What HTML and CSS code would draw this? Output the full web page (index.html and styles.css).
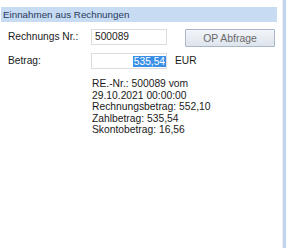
FILE: index.html
```html
<!DOCTYPE html>
<html lang="de">
<head>
    <meta charset="UTF-8">
    <title>Einnahmen aus Rechnungen</title>
    <link rel="stylesheet" href="styles.css">
</head>
<body>
    <div class="window">
        <div class="panel">
            <div class="caption">Einnahmen aus Rechnungen</div>
            <div class="row row-nr">
                <div class="label">Rechnungs Nr.:</div>
                <div class="field field-nr">500089</div>
                <button class="op-btn">OP Abfrage</button>
            </div>
            <div class="row row-betrag">
                <div class="label">Betrag:</div>
                <div class="field field-betrag"><span class="selected">535,54</span></div>
                <div class="unit">EUR</div>
            </div>
            <div class="info">
                <div>RE.-Nr.: 500089 vom</div>
                <div>29.10.2021 00:00:00</div>
                <div>Rechnungsbetrag: 552,10</div>
                <div>Zahlbetrag: 535,54</div>
                <div>Skontobetrag: 16,56</div>
            </div>
        </div>
        <div class="edge"></div>
    </div>
</body>
</html>
```

FILE: styles.css
```css
body {
    margin: 0;
    padding: 0;
    background: #fff;
    font-family: "Liberation Sans", Arial, sans-serif;
    font-size: 10.2px;
    color: #1a1a1a;
}
.window {
    display: flex;
    height: 248px;
    overflow: hidden;
}
.panel {
    flex: 1;
    padding-top: 7px;
    border-right: 1px solid #eeeeee;
}
.edge {
    width: 3px;
    background: #bed4ef;
}
.caption {
    height: 15px;
    line-height: 15px;
    margin: 0 5px 0 1px;
    padding-left: 2px;
    background: #c7dbf3;
    color: #26395a;
    font-size: 9.8px;
}
.row {
    display: flex;
    align-items: flex-start;
}
.row-nr {
    margin-top: 7px;
}
.row-betrag {
    margin-top: 6px;
}
.label {
    width: 83px;
    padding-left: 8px;
    line-height: 16px;
}
.field {
    box-sizing: border-box;
    width: 76px;
    height: 16px;
    line-height: 14px;
    border: 1px solid #dcdcdc;
    background: #fff;
    padding: 0 3px;
}
.field-betrag {
    text-align: right;
    padding: 2px 0 0 0;
    line-height: 11px;
}
.selected {
    display: inline-block;
    background: #3a8fe6;
    color: #fff;
    padding: 0 1px 0 1px;
}
.op-btn {
    box-sizing: border-box;
    margin-left: 18px;
    width: 90px;
    height: 18px;
    padding: 0;
    border: 1px solid #aab7c8;
    border-radius: 1px;
    background: linear-gradient(#f2f5f9, #dde4ec);
    color: #6a6a6a;
    font-family: inherit;
    font-size: 10.4px;
}
.unit {
    margin-left: 8px;
    line-height: 16px;
}
.info {
    margin: 9px 0 0 92px;
    line-height: 11.6px;
    font-size: 10.3px;
}
```
